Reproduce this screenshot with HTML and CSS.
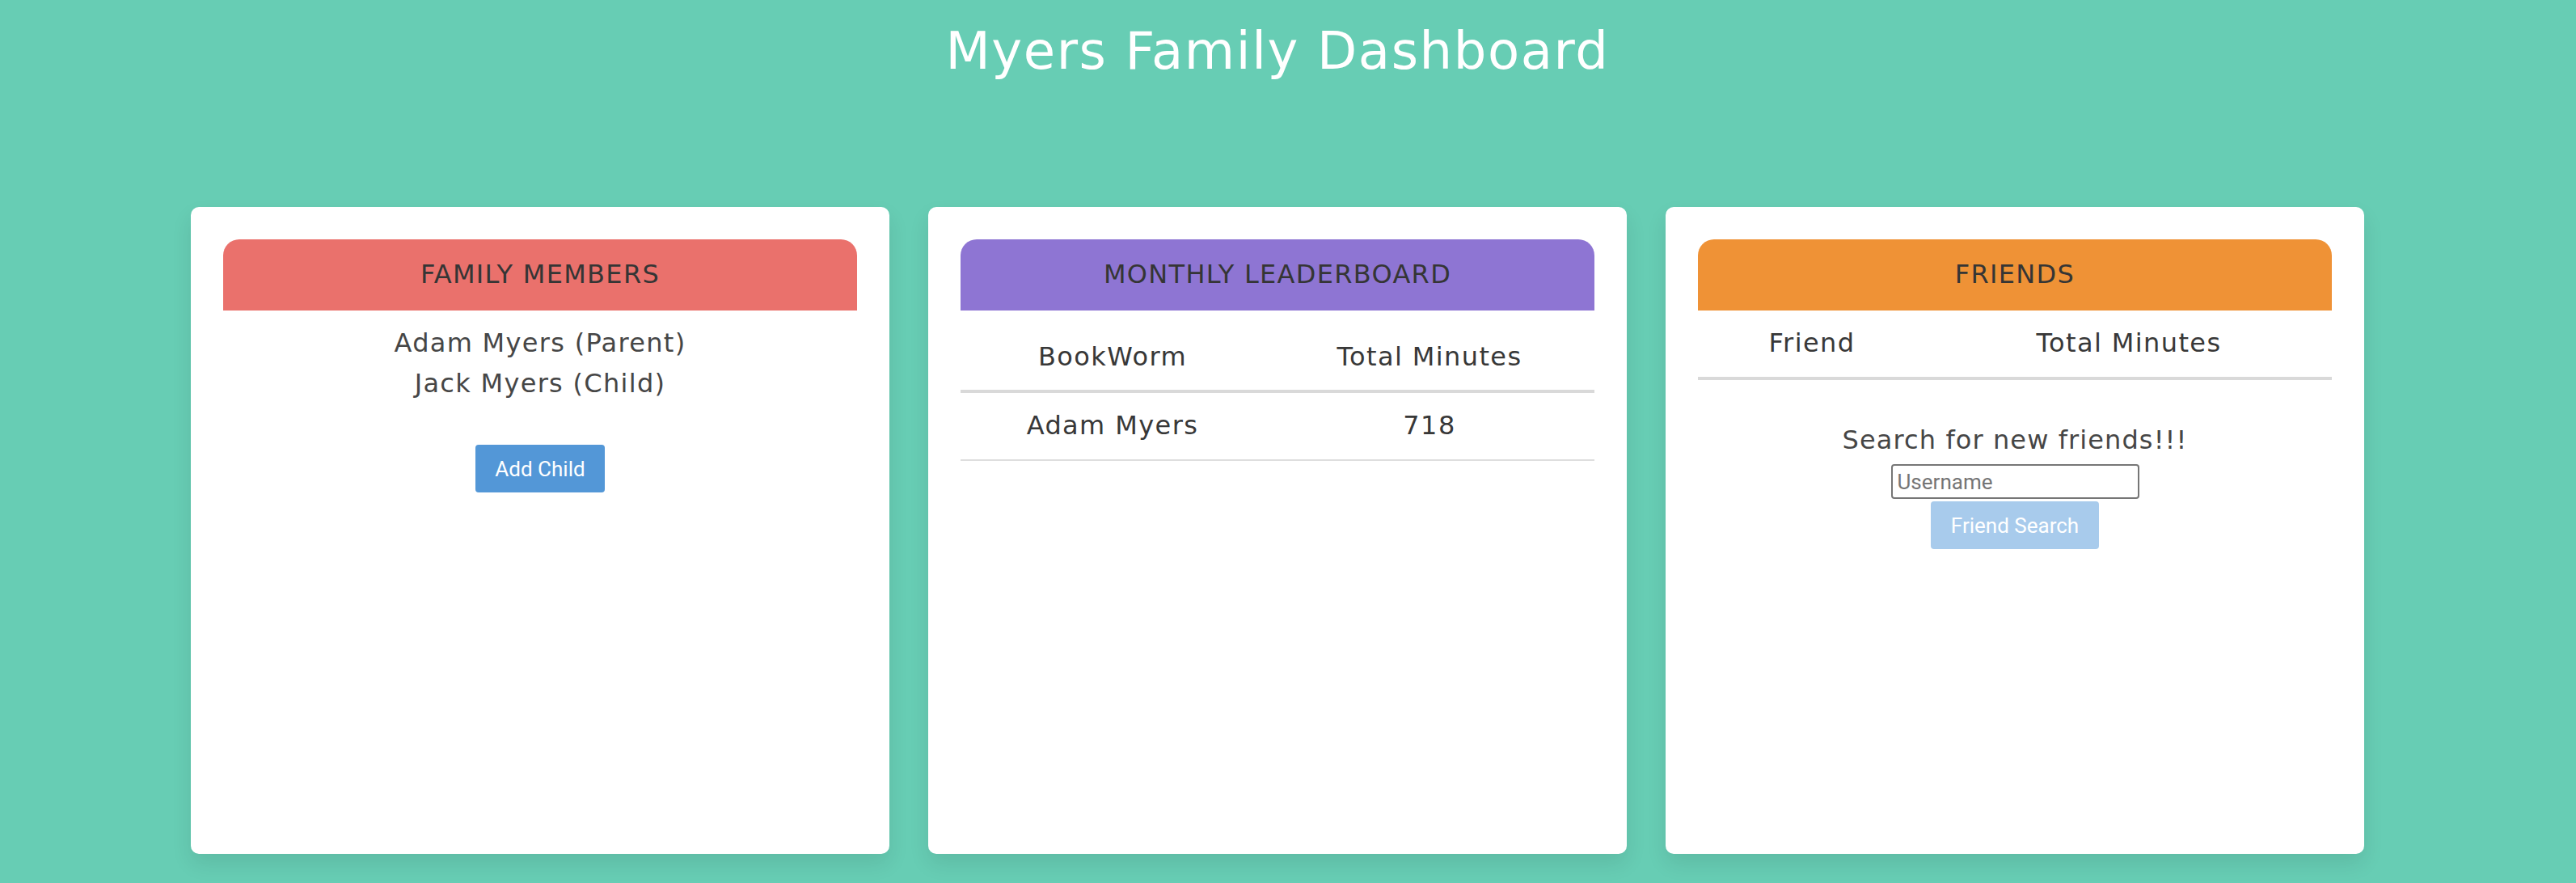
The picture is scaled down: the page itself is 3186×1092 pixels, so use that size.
FILE: index.html
```html
<!DOCTYPE html>
<html lang="en">
<head>
<meta charset="utf-8">
<title>Myers Family Dashboard</title>
<link rel="stylesheet" href="styles.css">
</head>
<body>
<div class="page">
  <h1 class="title">Myers Family Dashboard</h1>
  <div class="cards">
    <section class="card">
      <div class="card-head head-red">FAMILY MEMBERS</div>
      <div class="members">
        <div class="member">Adam Myers (Parent)</div>
        <div class="member">Jack Myers (Child)</div>
      </div>
      <div class="actions">
        <button class="btn btn-blue" type="button">Add Child</button>
      </div>
    </section>
    <section class="card">
      <div class="card-head head-purple">MONTHLY LEADERBOARD</div>
      <table class="tbl">
        <colgroup><col class="lb-c1"><col class="lb-c2"></colgroup>
        <thead>
          <tr><th class="th-tall">BookWorm</th><th class="th-tall">Total Minutes</th></tr>
        </thead>
        <tbody>
          <tr><td>Adam Myers</td><td>718</td></tr>
        </tbody>
      </table>
    </section>
    <section class="card">
      <div class="card-head head-orange">FRIENDS</div>
      <table class="tbl">
        <colgroup><col class="fr-c1"><col class="fr-c2"></colgroup>
        <thead>
          <tr><th>Friend</th><th>Total Minutes</th></tr>
        </thead>
      </table>
      <div class="search">
        <div class="search-title">Search for new friends!!!</div>
        <input class="search-input" type="text" placeholder="Username">
        <button class="btn btn-light" type="button">Friend Search</button>
      </div>
    </section>
  </div>
</div>
</body>
</html>
```
FILE: styles.css
```css
html, body {
  margin: 0;
  padding: 0;
}
body {
  background: #67cdb4;
  font-family: "DejaVu Sans", "Liberation Sans", sans-serif;
  color: #3a3a3a;
  height: 1092px;
  overflow: hidden;
}
.page {
  width: 3160px;
}
.title {
  margin: 31px 0 0;
  height: 64px;
  line-height: 64px;
  font-size: 64px;
  font-weight: normal;
  letter-spacing: 1.6px;
  color: #ffffff;
  text-align: center;
}
.cards {
  display: flex;
  justify-content: center;
  gap: 48px;
  margin-top: 161px;
}
.card {
  box-sizing: border-box;
  width: 864px;
  height: 800px;
  padding: 40px;
  background: #ffffff;
  border-radius: 10px;
  box-shadow: 0 12px 26px rgba(0, 0, 0, 0.09);
}
.card-head {
  height: 88px;
  line-height: 86px;
  border-radius: 20px 20px 0 0;
  text-align: center;
  font-size: 32px;
  letter-spacing: 1.3px;
  color: #353535;
}
.head-red { background: #ea716c; }
.head-purple { background: #8e75d3; }
.head-orange { background: #ef9236; }

.members {
  padding-top: 15px;
  text-align: center;
  font-size: 32px;
  line-height: 50px;
  letter-spacing: 1.3px;
  color: #464646;
}
.actions {
  display: flex;
  justify-content: center;
  margin-top: 51px;
}
.btn {
  box-sizing: border-box;
  height: 59px;
  border: 0;
  border-radius: 4px;
  font-family: Roboto, "Liberation Sans", sans-serif;
  font-size: 26px;
  color: #ffffff;
  padding: 0 24px;
}
.btn-blue {
  width: 160px;
  background: #5397d7;
}
.btn-light {
  width: 208px;
  background: #a8cbec;
  margin-top: 3px;
}

.tbl {
  width: 100%;
  border-collapse: collapse;
  font-size: 32px;
  letter-spacing: 1.4px;
  color: #383838;
}
.lb-c1 { width: 376px; }
.lb-c2 { width: 408px; }
.fr-c1 { width: 282px; }
.fr-c2 { width: 502px; }
.tbl th {
  font-weight: normal;
  text-align: center;
  line-height: 48px;
  padding: 16px 0 18px;
  border-bottom: 4px solid #d9d9d9;
}
.tbl th.th-tall {
  padding: 33px 0 17px;
}
.tbl td {
  text-align: center;
  line-height: 48px;
  padding: 16px 0 18px;
  border-bottom: 2px solid #dedede;
}

.search {
  display: flex;
  flex-direction: column;
  align-items: center;
  padding-top: 50px;
}
.search-title {
  font-size: 32px;
  line-height: 48px;
  letter-spacing: 1.1px;
  color: #464646;
}
.search-input {
  box-sizing: border-box;
  width: 307px;
  height: 43px;
  margin-top: 6px;
  border: 2px solid #767676;
  border-radius: 4px;
  padding: 0 6px;
  font-family: Roboto, "Liberation Sans", sans-serif;
  font-size: 26px;
  color: #333;
  background: #fff;
}
.search-input::placeholder {
  color: #757575;
}
```
